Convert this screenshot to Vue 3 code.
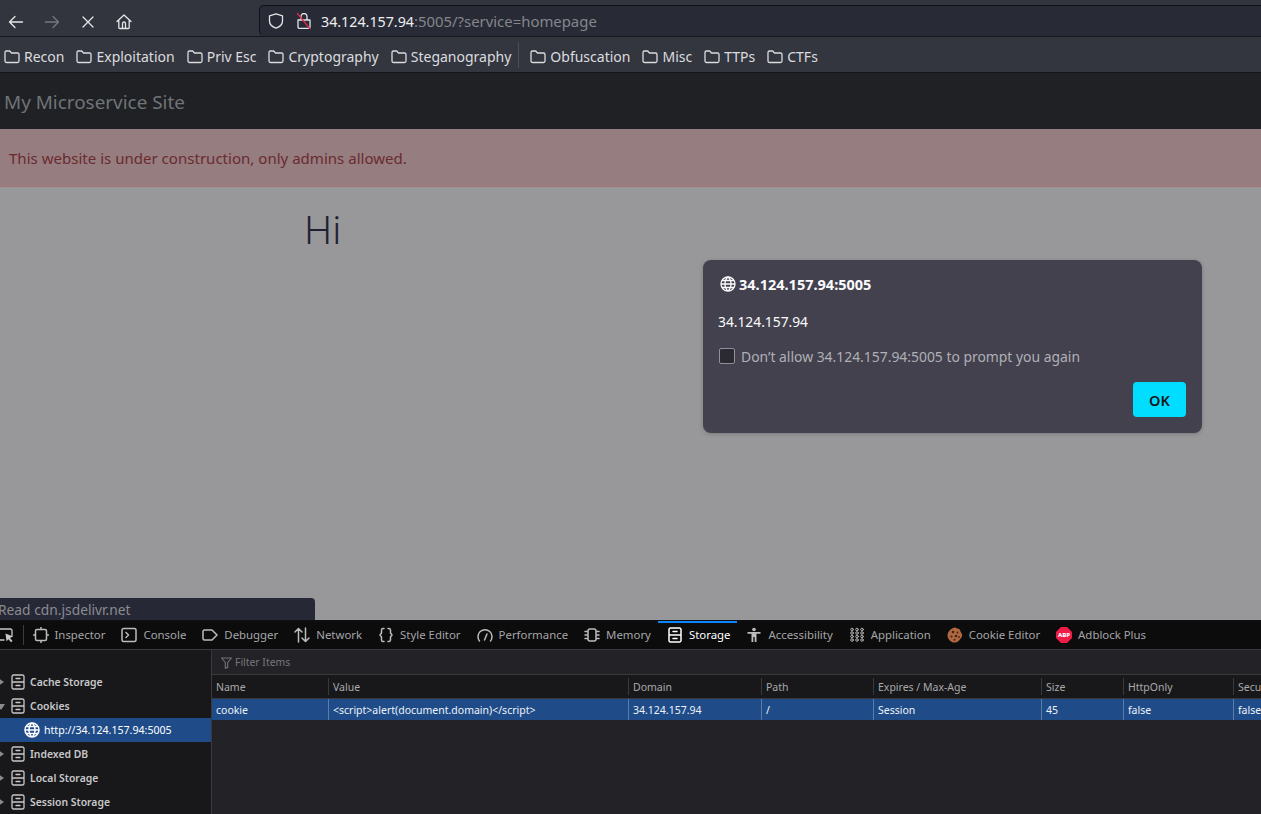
<script setup>
const icons = {
  back: 'M1.5 8h13M7 2.5 1.5 8 7 13.5',
  forward: 'M14.5 8h-13M9 2.5 14.5 8 9 13.5',
  stop: 'M3 3l10 10M13 3 3 13',
  home: 'M1 7.5 8 1l7 6.5M2.8 6v7.5a1 1 0 0 0 1 1h8.4a1 1 0 0 0 1-1V6M6.5 14.5V9.5a1.5 1.5 0 0 1 3 0v5',
  shield: 'M8 .8 1.500 2.800v5.200c0 3.500 2.800 5.900 6.500 7.200 3.700-1.300 6.500-3.700 6.500-7.200V2.800Z',
  lock: 'M5 7V3.500a3 3 0 0 1 6 0V7M2 7h12v7a1.500 1.500 0 0 1-1.500 1.500h-9A1.500 1.500 0 0 1 2 14Z',
  folder: 'M1 3.500A1.500 1.500 0 0 1 2.500 2h3.200L7.500 4h6A1.500 1.500 0 0 1 15 5.500v6.500a1.500 1.500 0 0 1-1.500 1.500h-11A1.500 1.500 0 0 1 1 12Z',
  inspector: 'M4 2.500h8a1.500 1.500 0 0 1 1.500 1.500v8a1.500 1.500 0 0 1-1.500 1.500H4A1.500 1.500 0 0 1 2.500 12V4A1.500 1.500 0 0 1 4 2.500ZM8 .500v2M8 13.500v2M.500 8h2M13.500 8h2',
  console: 'M2.500 1.500h11a1.500 1.500 0 0 1 1.500 1.500v10a1.500 1.500 0 0 1-1.500 1.500h-11A1.500 1.500 0 0 1 1 13V3a1.500 1.500 0 0 1 1.500-1.500ZM5 5.500 7.500 8 5 10.500',
  debugger: 'M2.500 3h7.500l5 5-5 5H2.500A1.500 1.500 0 0 1 1 11.500v-7A1.500 1.500 0 0 1 2.500 3Z',
  network: 'M4.500 15V1.500M1 5l3.500-3.500L8 5M11.500 1v13.500M8 11l3.500 3.500L15 11',
  style: 'M6 1.500H5a1.500 1.500 0 0 0-1.500 1.500v3L2 8l1.500 2v3A1.500 1.500 0 0 0 5 14.500h1M10 1.500h1A1.500 1.500 0 0 1 12.500 3v3L14 8l-1.500 2v3a1.500 1.500 0 0 1-1.500 1.500h-1',
  performance: 'M2.500 14A7 7 0 1 1 13.500 14M7.500 13 10 7',
  memory: 'M6 2h4a2 2 0 0 1 2 2v8a2 2 0 0 1-2 2H6a2 2 0 0 1-2-2V4a2 2 0 0 1 2-2ZM1 4.500h3M1 8h3M1 11.500h3M12 4.500h3M12 8h3M12 11.500h3',
  storage: 'M3.500 1h9A1.500 1.500 0 0 1 14 2.500v11a1.500 1.500 0 0 1-1.500 1.500h-9A1.500 1.500 0 0 1 2 13.500v-11A1.500 1.500 0 0 1 3.500 1ZM2 8h12M6 4.500h4M6 11.500h4',
  filter: 'M2 2.500h12l-4.500 5.500v6l-3 1V8Z',
  globe: 'M8 1a7 7 0 1 0 0 14A7 7 0 0 0 8 1ZM1 8h14M2 4.500h12M2 11.500h12M8 1C5.500 3 5 6 5 8s.5 5 3 7M8 1c2.500 2 3 5 3 7s-.5 5-3 7',
  cursor: 'M14 9V3.500A1.500 1.500 0 0 0 12.500 2h-10A1.500 1.500 0 0 0 1 3.500v8A1.500 1.500 0 0 0 2.500 13H6'
}

const bookmarksA = ['Recon', 'Exploitation', 'Priv Esc', 'Cryptography', 'Steganography']
const bookmarksB = ['Obfuscation', 'Misc', 'TTPs', 'CTFs']

const tabs = [
  { name: 'Inspector', icon: 'inspector' },
  { name: 'Console', icon: 'console' },
  { name: 'Debugger', icon: 'debugger' },
  { name: 'Network', icon: 'network' },
  { name: 'Style Editor', icon: 'style' },
  { name: 'Performance', icon: 'performance' },
  { name: 'Memory', icon: 'memory' },
  { name: 'Storage', icon: 'storage', active: true },
  { name: 'Accessibility', icon: 'accessibility' },
  { name: 'Application', icon: 'application' },
  { name: 'Cookie Editor', icon: 'cookie' },
  { name: 'Adblock Plus', icon: 'abp' }
]

const tree = [
  { name: 'Cache Storage', arrow: 'closed' },
  { name: 'Cookies', arrow: 'open' },
  { name: 'http://34.124.157.94:5005', child: true },
  { name: 'Indexed DB', arrow: 'closed' },
  { name: 'Local Storage', arrow: 'closed' },
  { name: 'Session Storage', arrow: 'closed' }
]

const columns = [
  ['Name', 'cookie'],
  ['Value', '<script>alert(document.domain)<\/script>'],
  ['Domain', '34.124.157.94'],
  ['Path', '/'],
  ['Expires / Max-Age', 'Session'],
  ['Size', '45'],
  ['HttpOnly', 'false'],
  ['Secure', 'false']
]

const dots = [2.5, 6, 9.5, 13].flatMap((y) => [3, 8, 13].map((x) => ({ x, y })))
</script>

<template>
  <div class="app">
    <header class="nav">
      <div class="nav-left">
        <svg class="ico nav-back" viewBox="0 0 16 16"><path :d="icons.back" /></svg>
        <svg class="ico nav-fwd" viewBox="0 0 16 16"><path :d="icons.forward" /></svg>
        <svg class="ico nav-stop" viewBox="0 0 16 16"><path :d="icons.stop" /></svg>
        <svg class="ico nav-home" viewBox="0 0 16 16"><path :d="icons.home" /></svg>
      </div>
      <div class="urlbar">
        <svg class="ico shield" viewBox="0 0 16 16"><path :d="icons.shield" /></svg>
        <svg class="ico lock" viewBox="0 0 16 16">
          <path :d="icons.lock" />
          <path class="slash" d="M1.500 .5 14 16" />
        </svg>
        <span class="url"><span class="url-host">34.124.157.94</span>:5005/?service=homepage</span>
      </div>
    </header>

    <nav class="bookmarks">
      <span v-for="b in bookmarksA" :key="b" class="bm">
        <svg class="ico folder" viewBox="0 0 16 16"><path :d="icons.folder" /></svg>{{ b }}
      </span>
      <i class="bm-sep"></i>
      <span v-for="b in bookmarksB" :key="b" class="bm">
        <svg class="ico folder" viewBox="0 0 16 16"><path :d="icons.folder" /></svg>{{ b }}
      </span>
    </nav>

    <main class="page">
      <div class="site-nav">My Microservice Site</div>
      <div class="alert">This website is under construction, only admins allowed.</div>
      <h1 class="hi">Hi</h1>

      <div class="dialog">
        <div class="dlg-title">
          <svg class="ico dlg-globe" viewBox="0 0 16 16"><path :d="icons.globe" /></svg>
          34.124.157.94:5005
        </div>
        <div class="dlg-msg">34.124.157.94</div>
        <label class="dlg-check"><i class="box"></i>Don’t allow 34.124.157.94:5005 to prompt you again</label>
        <div class="dlg-actions"><button class="ok">OK</button></div>
      </div>

      <div class="status"><span>Read cdn.jsdelivr.net</span></div>
    </main>

    <section class="devtools">
      <div class="dt-tabs">
        <div class="picker">
          <svg class="ico picker-ico" viewBox="0 0 16 16">
            <path :d="icons.cursor" />
            <path class="solid" d="M7.500 6.500 15 9.500l-3 1.500 2.500 3-1.500 1.200-2.500-3-2 2Z" />
          </svg>
        </div>
        <i class="dt-sep"></i>
        <div v-for="t in tabs" :key="t.name" class="tab" :class="{ active: t.active }">
          <svg v-if="icons[t.icon]" class="ico tab-ico" viewBox="0 0 16 16"><path :d="icons[t.icon]" /></svg>
          <svg v-else-if="t.icon === 'accessibility'" class="ico tab-ico" viewBox="0 0 16 16">
            <circle class="solid" cx="8" cy="2.500" r="1.800" />
            <path class="solid" d="M1.500 5h13v1.800H10.500V15H8.700v-5H7.300v5H5.500V6.800H1.500Z" />
          </svg>
          <svg v-else-if="t.icon === 'application'" class="ico tab-ico app-ico" viewBox="0 0 16 16">
            <circle v-for="(d, i) in dots" :key="i" :cx="d.x" :cy="d.y" r="1.300" />
          </svg>
          <svg v-else-if="t.icon === 'cookie'" class="tab-ico" viewBox="0 0 16 16">
            <path d="M8 .5c1 0 1.500.8 2.500 1s2 .5 2.500 1.500.4 1.800 1.200 2.800c.8 1 1.200 2 .8 3.500s-1.500 2.500-2.500 3.700-2.500 2.500-4.500 2.500-3.500-.5-5-1.800S.5 10.500.5 8.500s1-4 2.500-5.500S6.500.5 8 .5Z" fill="#b0683e" />
            <circle cx="6" cy="5" r="1.300" fill="#40241a" />
            <circle cx="10.500" cy="5.500" r="1" fill="#40241a" />
            <circle cx="4.500" cy="9.500" r="1.100" fill="#40241a" />
            <circle cx="9" cy="9" r="1.300" fill="#40241a" />
            <circle cx="12" cy="10" r=".9" fill="#40241a" />
            <circle cx="7.500" cy="12.700" r="1" fill="#40241a" />
          </svg>
          <svg v-else class="tab-ico abp-ico" viewBox="0 0 16 16">
            <path d="M5 0h6l5 5v6l-5 5H5l-5-5V5Z" fill="#ee1c46" />
            <text x="8" y="10.400" text-anchor="middle" class="abp-text">ABP</text>
          </svg>
          <span class="tab-name">{{ t.name }}</span>
        </div>
      </div>

      <div class="dt-body">
        <aside class="tree">
          <div v-for="n in tree" :key="n.name" class="node" :class="{ child: n.child }">
            <template v-if="n.child">
              <svg class="ico node-globe" viewBox="0 0 16 16"><path :d="icons.globe" /></svg>
              <span>{{ n.name }}</span>
            </template>
            <template v-else>
              <i class="arrow" :class="n.arrow"></i>
              <svg class="ico node-ico" viewBox="0 0 16 16"><path :d="icons.storage" /></svg>
              <span class="node-name">{{ n.name }}</span>
            </template>
          </div>
        </aside>
        <div class="content">
          <div class="filter">
            <svg class="ico filter-ico" viewBox="0 0 16 16"><path :d="icons.filter" /></svg>
            <span>Filter Items</span>
          </div>
          <div class="table">
            <div v-for="c in columns" :key="c[0]" class="col">
              <div class="th"><span>{{ c[0] }}</span></div>
              <div class="td">{{ c[1] }}</div>
            </div>
          </div>
        </div>
      </div>
    </section>
  </div>
</template>

<style scoped>
.app {
  width: 1261px;
  height: 814px;
  display: flex;
  flex-direction: column;
  overflow: hidden;
  font-family: "Noto Sans", sans-serif;
  background: #98989a;
}
.ico {
  width: 16px;
  height: 16px;
  flex: none;
  fill: none;
  stroke: currentColor;
  stroke-width: 1.3;
  stroke-linecap: round;
  stroke-linejoin: round;
}
.ico .solid {
  fill: currentColor;
  stroke: none;
}

.nav {
  height: 37px;
  flex: none;
  display: flex;
  padding-top: 5px;
  box-sizing: border-box;
  background: #32353d;
  border-bottom: 1px solid #16171b;
}
.nav-left {
  width: 259px;
  flex: none;
  display: flex;
  align-items: center;
  color: #e6e6e8;
  padding: 3px 0 0 8px;
  box-sizing: border-box;
}
.nav-fwd { margin-left: 20px; color: #75777d; }
.nav-stop { margin-left: 20px; }
.nav-home { margin-left: 20px; }
.urlbar {
  flex: 1;
  height: 31px;
  box-sizing: border-box;
  display: flex;
  align-items: center;
  background: #282b36;
  border-top: 1px solid #111216;
  border-left: 1px solid #111216;
  border-radius: 5px 0 0 5px;
  padding-left: 8px;
}
.shield { color: #e3e3e6; }
.lock { color: #e3e3e6; margin-left: 12px; }
.lock .slash { stroke: #e22850; }
.url {
  margin-left: 9px;
  font-size: 14.900px;
  color: #85868c;
}
.url-host { color: #eeeef0; font-size: 14.250px; }

.bookmarks {
  height: 36px;
  flex: none;
  box-sizing: border-box;
  display: flex;
  align-items: center;
  padding: 4px 0 0 4px;
  background: #33363f;
  border-bottom: 1px solid #15161a;
  color: #dcdcdf;
  font-size: 14px;
}
.bm {
  display: flex;
  align-items: center;
  gap: 4px;
  margin-right: 12px;
  white-space: nowrap;
}
.bm-sep {
  width: 1px;
  height: 26px;
  margin: -4px 11px 0 -5px;
  background: #4b4e56;
}

.page {
  flex: 1;
  position: relative;
  min-height: 0;
}
.site-nav {
  height: 56px;
  box-sizing: border-box;
  display: flex;
  align-items: center;
  padding: 2px 0 0 4px;
  background: #202125;
  color: #6f7479;
  font-size: 18.900px;
}
.alert {
  height: 58px;
  box-sizing: border-box;
  display: flex;
  align-items: center;
  padding-left: 9px;
  background: #967d80;
  border-bottom: 1px solid #a4737c;
  color: #6b2a30;
  font-size: 15.050px;
}
.hi {
  margin: 15px 0 0 304px;
  font-size: 39px;
  line-height: 54px;
  font-weight: 300;
  color: #1f2130;
}

.dialog {
  position: absolute;
  left: 703px;
  top: 187px;
  width: 499px;
  height: 173px;
  box-sizing: border-box;
  padding: 0 16px;
  background: #42414d;
  border-radius: 8px;
  box-shadow: 0 1px 4px rgba(0, 0, 0, .2);
  color: #fbfbfe;
  display: flex;
  flex-direction: column;
}
.dlg-title {
  display: flex;
  align-items: center;
  gap: 3px;
  margin-top: 14px;
  height: 20px;
  font-size: 14.500px;
  font-weight: 700;
}
.dlg-globe { margin-left: 1px; }
.dlg-msg {
  margin: 18px 0 0 -1px;
  height: 20px;
  line-height: 20px;
  font-size: 13.800px;
}
.dlg-check {
  display: flex;
  align-items: center;
  margin-top: 14px;
  height: 20px;
  font-size: 13.900px;
  color: #b0b0b6;
}
.box {
  width: 14px;
  height: 14px;
  margin-right: 6px;
  background: #2b2a33;
  border: 1px solid #8f8f9d;
  border-radius: 2px;
}
.dlg-actions {
  display: flex;
  justify-content: flex-end;
  margin-top: 16px;
}
.ok {
  width: 53px;
  height: 35px;
  border: 0;
  border-radius: 4px;
  background: #00ddff;
  color: #15141a;
  font: 600 14.500px "Noto Sans", sans-serif;
}

.status {
  position: absolute;
  left: 0;
  bottom: 0;
  width: 315px;
  height: 22px;
  overflow: hidden;
  background: #262836;
  border-radius: 0 4px 0 0;
  color: #8a8b90;
  font-size: 13.800px;
  line-height: 24px;
}
.status span { margin-left: -2px; display: block; }

.devtools {
  height: 194px;
  flex: none;
  display: flex;
  flex-direction: column;
  border-top: 1px solid #101012;
  box-sizing: border-box;
  background: #18181a;
  overflow: hidden;
}
.dt-tabs {
  height: 29px;
  flex: none;
  box-sizing: border-box;
  display: flex;
  align-items: center;
  background: #0c0c0d;
  border-bottom: 1px solid #38383d;
  font-size: 11.400px;
  color: #a5a5a8;
  white-space: nowrap;
}
.picker {
  width: 16px;
  margin-left: -1px;
  display: flex;
  overflow: hidden;
  color: #c8c8ca;
}
.picker-ico { margin-left: -1px; }
.dt-sep {
  width: 1px;
  height: 20px;
  margin: 0 0 0 7.500px;
  background: #3c3c40;
}
.tab {
  height: 28px;
  box-sizing: border-box;
  display: flex;
  align-items: center;
  gap: 6px;
  padding: 0 7px 0 9px;
  position: relative;
}
.tab-name { margin-bottom: 2px; }
.tab.active { color: #fff; }
.tab.active::before {
  content: "";
  position: absolute;
  left: 0;
  right: 0;
  top: 0;
  height: 2px;
  background: #0a84ff;
}
.tab-ico {
  width: 16px;
  height: 16px;
  flex: none;
  stroke-width: 1.500;
  color: #bcbcbe;
}
.tab.active .tab-ico { color: #fff; }
.app-ico circle {
  fill: none;
  stroke-width: .9;
}
.abp-text {
  fill: #fff;
  font: 800 6px "Noto Sans", sans-serif;
}

.dt-body {
  flex: 1;
  min-height: 0;
  display: flex;
}
.tree {
  width: 212px;
  flex: none;
  box-sizing: border-box;
  padding-top: 20px;
  background: #18181a;
  border-right: 1px solid #38383d;
}
.node {
  height: 24px;
  display: flex;
  align-items: center;
  position: relative;
  font-size: 10.400px;
  color: #c8c8ca;
  white-space: nowrap;
}
.node.child {
  background: #1f4c89;
  color: #fff;
  padding-left: 24px;
  gap: 4px;
  font-size: 10.600px;
}
.node-name { font-weight: 600; margin-left: 4px; }
.arrow {
  position: absolute;
  left: -2px;
  top: 8px;
  width: 0;
  height: 0;
  border-left: 6px solid #8a8a8d;
  border-top: 4px solid transparent;
  border-bottom: 4px solid transparent;
}
.arrow.open {
  left: -3px;
  top: 10px;
  border-top: 6px solid #8a8a8d;
  border-left: 4px solid transparent;
  border-right: 4px solid transparent;
  border-bottom: 0;
}
.node-ico { margin-left: 10px; }
.node-globe { stroke-width: 1.5; }

.content {
  flex: 1;
  min-width: 0;
  display: flex;
  flex-direction: column;
  background: #232327;
}
.filter {
  height: 25px;
  flex: none;
  box-sizing: border-box;
  display: flex;
  align-items: center;
  gap: 2px;
  padding-left: 8px;
  border-bottom: 1px solid #38383d;
  font-size: 10.400px;
  color: #77777b;
}
.filter-ico { width: 13px; height: 13px; }
.table {
  display: grid;
  grid-template-columns: 116px 300px 133px 112px 168px 82px 110px 40px;
  font-size: 10.500px;
  white-space: nowrap;
}
.col { min-width: 0; overflow: hidden; }
.th {
  height: 24px;
  box-sizing: border-box;
  padding: 3px 0;
  background: #18181a;
  border-bottom: 1px solid #38383d;
  color: #a9a9ac;
}
.th span {
  display: block;
  height: 17px;
  line-height: 19px;
  padding-left: 4px;
  border-left: 1px solid #38383d;
}
.col:first-child .th span { border-left: 0; }
.td {
  height: 21px;
  line-height: 23px;
  box-sizing: border-box;
  padding-left: 4px;
  background: #1f4c89;
  color: #eef2f7;
  border-left: 1px solid #5a7ea8;
}
.col:first-child .td { border-left: 0; }
</style>

<style>
html, body { margin: 0; background: #98989a; }
</style>
